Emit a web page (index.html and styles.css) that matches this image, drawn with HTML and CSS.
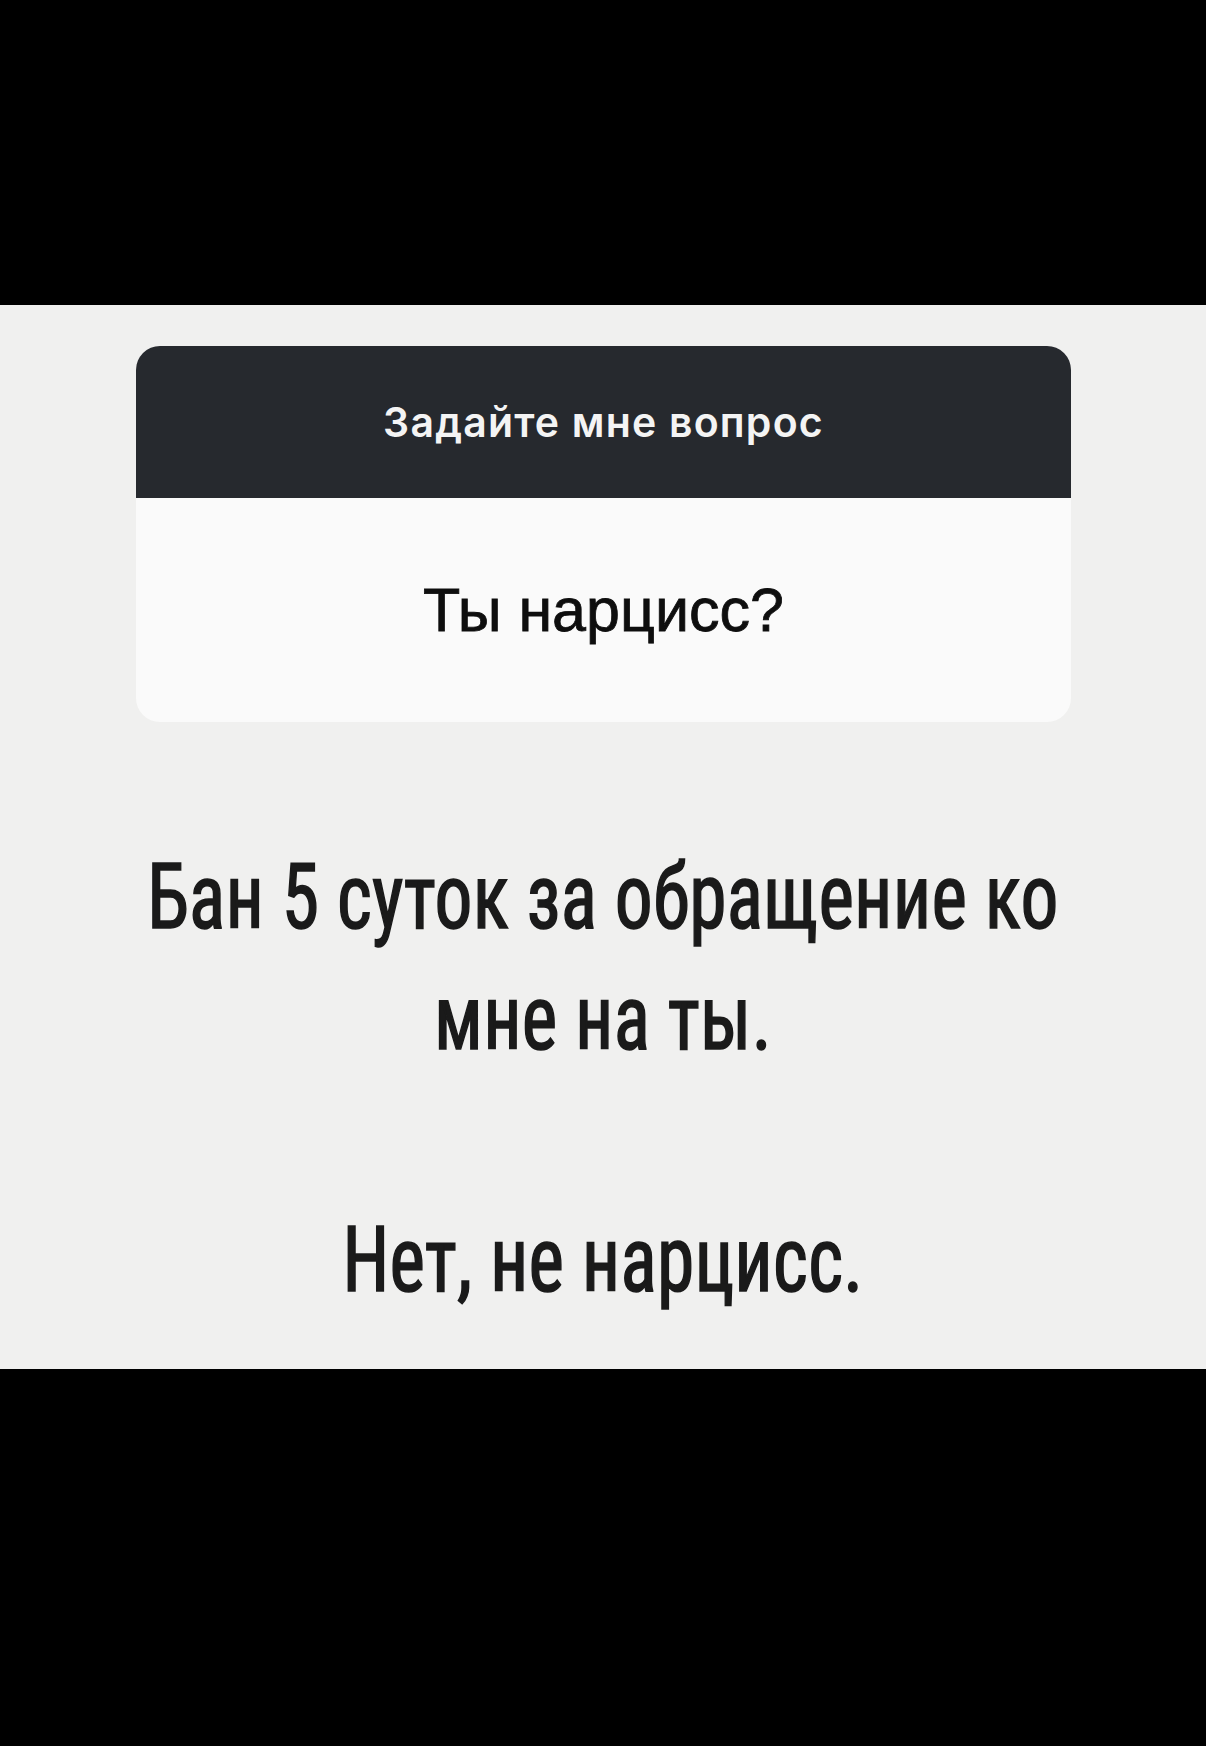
FILE: index.html
```html
<!DOCTYPE html>
<html lang="ru">
<head>
    <meta charset="UTF-8">
    <title>Вопрос</title>
    <link rel="stylesheet" href="styles.css">
</head>
<body>
<div class="bar"></div>

<main class="story">
    <section class="qbox">
        <div class="qbox-head">Задайте мне вопрос</div>
        <div class="qbox-body">Ты нарцисс?</div>
    </section>

    <p class="answer">
        <span class="line">Бан 5 суток за обращение ко</span>
        <span class="line">мне на ты.</span>
        <span class="line gap"></span>
        <span class="line">Нет, не нарцисс.</span>
    </p>
</main>

<div class="bar bar-bottom"></div>
</body>
</html>
```

FILE: styles.css
```css
* {
    box-sizing: border-box;
}

body {
    margin: 0;
    background-color: #000;
    font-family: "Liberation Sans", Arial, sans-serif;
}

.bar {
    height: 305px;
    background-color: #000;
}

.bar-bottom {
    height: 377px;
}

.story {
    height: 1064px;
    background-color: #f0f0ef;
    padding-top: 41px;
    display: flex;
    flex-direction: column;
    align-items: center;
}

/* question sticker */
.qbox {
    width: 935px;
    margin-left: 1px;
    border-radius: 24px;
    overflow: hidden;
    background-color: #fafafa;
}

.qbox-head {
    height: 152px;
    background-color: #26292e;
    color: #f4f4f4;
    font-family: Inter, "Liberation Sans", sans-serif;
    font-weight: 600;
    font-size: 41px;
    letter-spacing: 1.2px;
    display: flex;
    align-items: center;
    justify-content: center;
}

.qbox-body {
    height: 224px;
    color: #0e0e0e;
    -webkit-text-stroke: 0.8px #0e0e0e;
    font-size: 61px;
    display: flex;
    align-items: center;
    justify-content: center;
}

/* answer text, squeezed narrower than the condensed face */
.answer {
    align-self: stretch;
    margin: 115px 0 0;
    font-family: "Roboto Condensed", "Liberation Sans Narrow", "DejaVu Sans Condensed", "Arial Narrow", sans-serif;
    font-stretch: condensed;
    font-weight: 400;
    font-size: 91px;
    line-height: 121px;
    letter-spacing: 0.3px;
    color: #1a1a1a;
    -webkit-text-stroke: 1.6px #1a1a1a;
    text-align: center;
}

.line {
    display: block;
    white-space: nowrap;
    transform: scaleX(0.83);
}

.gap {
    height: 121px;
}
```
